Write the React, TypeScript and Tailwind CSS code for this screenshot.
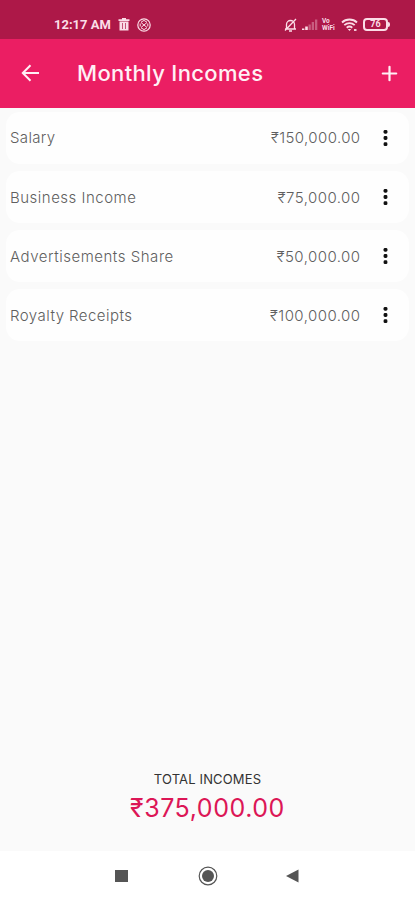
import { Plus } from 'lucide-react';

const incomes = [
  { name: 'Salary', amount: '₹150,000.00', nameClass: 'tracking-[.35px]', amountClass: 'tracking-[.4px]' },
  { name: 'Business Income', amount: '₹75,000.00', nameClass: 'tracking-[.5px]', amountClass: 'tracking-[.45px]' },
  { name: 'Advertisements Share', amount: '₹50,000.00', nameClass: 'tracking-[.53px]', amountClass: 'tracking-[.45px]' },
  { name: 'Royalty Receipts', amount: '₹100,000.00', nameClass: 'tracking-[.45px]', amountClass: 'tracking-[.45px]' },
];

function StatusBar() {
  return (
    <div className="flex h-[39px] items-center bg-[#ad1848] pt-[10px] pr-[25px] pl-[54px] text-[#fbdde7]">
      <span className="font-['Roboto',sans-serif] text-[13px] leading-none font-bold whitespace-nowrap">12:17 AM</span>
      <svg className="ml-[7px]" width="12" height="13" viewBox="0 0 12 13" fill="currentColor">
        <path d="M4 0h4v1.2h3.5v1.8H.5V1.2H4z" />
        <path d="M1.5 3.5h9V12.5h-9z" />
        <path d="M4.5 5v6M7.5 5v6" stroke="#ad1848" strokeWidth=".7" />
      </svg>
      <svg className="ml-[7px]" width="14" height="14" viewBox="0 0 14 14" fill="none" stroke="currentColor">
        <circle cx="7" cy="7" r="6.2" strokeWidth="1.2" />
        <path d="M4 4.2l3-1.8 3 1.8M4 9.8l3 1.8 3-1.8M4 4.5l6 5M10 4.5l-6 5M3.2 5.5v3M10.8 5.5v3" strokeWidth="1" />
      </svg>
      <div className="ml-auto flex items-center">
        <svg width="13" height="14" viewBox="0 0 13 14" fill="none" stroke="currentColor" strokeWidth="1.3">
          <path d="M1 11h11M2.5 10.5V6.5a4 4 0 0 1 8 0v4M5 13h3M12 1L1 12.5" />
        </svg>
        <svg className="ml-[5px]" width="16" height="13" viewBox="0 0 16 13" fill="currentColor">
          <path d="M0 10.5h2.4V12H0zM3.2 8.5h2.6V12H3.2z" />
          <path d="M6.5 6.5h2.3V12H6.5zM9.7 4h2.3v8H9.7zM13 1.5h2.3V12H13z" opacity=".35" />
        </svg>
        <span className="ml-[4px] flex w-[16px] flex-col font-['Roboto',sans-serif] text-[6.5px] leading-[7px] font-bold">
          <span>Vo</span>
          <span>WiFi</span>
        </span>
        <svg className="ml-[3px]" width="17" height="14" viewBox="0 0 17 14" fill="none" stroke="currentColor" strokeWidth="1.8">
          <path d="M1 4.5c4-4 11-4 15 0M3.3 7.2c3-2.8 7.4-2.8 10.4 0M5.7 9.7c1.7-1.4 3.9-1.4 5.6 0" />
          <path d="M6.8 11h3.4L8.5 13z" fill="currentColor" stroke="none" />
          <path d="M13 12h2.5" />
        </svg>
        <div className="ml-[5px] flex h-[13px] w-[25px] items-center justify-center rounded-[4px] border-2 border-current font-['Roboto',sans-serif] text-[9px] leading-none font-bold">76</div>
        <div className="h-[5px] w-[2px] rounded-r-sm bg-current" />
      </div>
    </div>
  );
}

function AppBar() {
  return (
    <header className="flex h-[68.5px] items-center bg-[#eb1e63] px-[16px] text-[#fff0f5]">
      <svg className="ml-[5px]" width="19" height="18" viewBox="0 0 19 18" fill="none" stroke="currentColor" strokeWidth="2">
        <path d="M18 9H2M9.5 1.3L1.8 9l7.7 7.7" />
      </svg>
      <h1 className="ml-[37px] text-[22px] leading-none font-medium tracking-[.35px] whitespace-nowrap">Monthly Incomes</h1>
      <Plus className="ml-auto -mr-[2px]" size={23} strokeWidth={2.3} />
    </header>
  );
}

export default function App() {
  return (
    <div className="flex h-[900px] w-[415px] flex-col overflow-hidden bg-[#fafafa] font-['Inter',sans-serif]">
      <StatusBar />
      <AppBar />
      <main className="flex flex-1 flex-col">
        <ul className="flex flex-col gap-[7.3px] px-[6px] pt-[4px]">
          {incomes.map((item) => (
            <li key={item.name} className="flex h-[52px] items-center rounded-[14px] bg-[#fefefe] pr-[21px] pl-[4px] text-[15px] font-light text-[#5f5f5f]">
              <span className={`pt-[2px] ${item.nameClass}`}>{item.name}</span>
              <span className={`ml-auto pt-[2px] ${item.amountClass}`}>{item.amount}</span>
              <svg className="ml-[22.5px]" width="5" height="18" viewBox="0 0 5 18" fill="#111">
                <rect x=".6" y=".9" width="3.8" height="3.8" rx="1.4" />
                <rect x=".6" y="7.1" width="3.8" height="3.8" rx="1.4" />
                <rect x=".6" y="13.3" width="3.8" height="3.8" rx="1.4" />
              </svg>
            </li>
          ))}
        </ul>
        <div className="mt-auto flex flex-col items-center pb-[28px]">
          <p className="text-[13px] leading-[18px] tracking-[.15px] text-[#333]">TOTAL INCOMES</p>
          <p className="mt-[5px] text-[25px] leading-[30px] tracking-[.55px] text-[#dc1656]">₹375,000.00</p>
        </div>
      </main>
      <nav className="flex h-[49px] items-center bg-white pl-[115px] text-[#555]">
        <div className="h-[12px] w-[13px] bg-current" />
        <svg className="ml-[70px]" width="20" height="20" viewBox="0 0 20 20">
          <circle cx="10" cy="10" r="8.8" fill="none" stroke="currentColor" strokeWidth="1.2" />
          <circle cx="10" cy="10" r="6" fill="currentColor" />
        </svg>
        <svg className="ml-[68px]" width="13" height="14" viewBox="0 0 13 14" fill="currentColor">
          <path d="M0 7L12.5.5v13z" />
        </svg>
      </nav>
    </div>
  );
}
